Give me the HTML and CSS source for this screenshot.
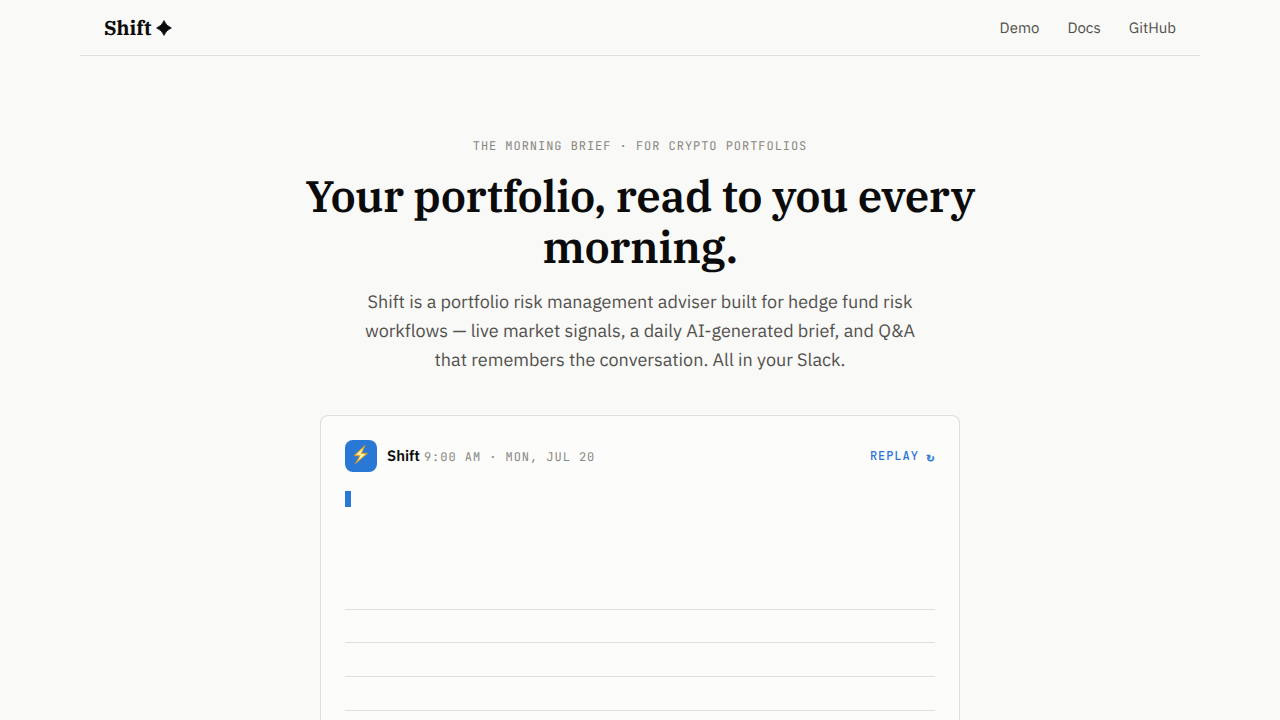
FILE: index.html
```html
<!DOCTYPE html>
<html lang="en">
<head>
<meta charset="utf-8">
<title>Shift</title>
<link rel="stylesheet" href="styles.css">
</head>
<body>
<header class="nav">
  <a class="brand">Shift<svg class="star" viewBox="0 0 16 16"><path d="M8 .6Q9.900 5.800 15.400 8Q9.900 10.200 8 15.400Q6.100 10.200 .6 8Q6.100 5.800 8 .6Z" fill="#0b0b0b" stroke="#0b0b0b" stroke-width=".8" stroke-linejoin="round"/></svg></a>
  <nav class="links"><a>Demo</a><a>Docs</a><a>GitHub</a></nav>
</header>
<main class="hero">
  <p class="eyebrow">The morning brief · for crypto portfolios</p>
  <h1 class="title">Your portfolio, read to you every morning.</h1>
  <p class="lead">Shift is a portfolio risk management adviser built for hedge fund risk workflows — live market signals, a daily AI-generated brief, and Q&amp;A that remembers the conversation. All in your Slack.</p>
  <section class="card">
    <div class="card-head">
      <svg class="avatar" viewBox="0 0 32 32"><path d="M20 5.400L9 15.600L14.800 15.900L10.300 23.700L22.400 13.400L16.600 13.100Z" fill="#fbc02d" stroke="#e39a1c" stroke-width=".8" stroke-linejoin="round"/><path d="M18 8.200L11.300 14.800L16 15.100L13.200 20.200L20.300 14.200L15.300 13.900Z" fill="#fff8c4"/></svg>
      <div class="sender"><span class="name">Shift</span> <span class="time">9:00 AM · MON, JUL 20</span></div>
      <button class="replay">REPLAY <span class="arrow">↻</span></button>
    </div>
    <div class="typing"><span class="caret"></span></div>
    <div class="row first"></div><div class="row"></div><div class="row"></div><div class="row last"></div>
  </section>
</main>
</body>
</html>
```
FILE: styles.css
```css
* { box-sizing: border-box; }
body { margin: 0; height: 720px; overflow: hidden; display: flex; flex-direction: column; background: #f9f9f7; color: #0b0b0b; font-family: "IBM Plex Sans", Roboto, sans-serif; text-rendering: geometricPrecision; -webkit-font-smoothing: antialiased; }
.nav { width: 1120px; height: 56px; flex: none; margin: 0 auto; padding: 0 24px; border-bottom: 1px solid #dfdfdc; display: flex; align-items: center; justify-content: space-between; }
.brand { display: flex; align-items: center; gap: 5px; font: 700 20px "IBM Plex Serif", "Noto Serif", serif; }
.star { width: 16px; height: 16px; }
.links { display: flex; gap: 28px; padding-top: 2px; font-size: 15px; line-height: 20px; color: #52514e; }
.hero { flex: 1; min-height: 0; display: flex; flex-direction: column; align-items: center; padding-top: 80px; }
.eyebrow { margin: 0; font: 12px/20px "JetBrains Mono", "IBM Plex Mono", monospace; letter-spacing: .08em; text-transform: uppercase; color: #898781; white-space: nowrap; }
.title { width: 720px; margin: 15px 0 0; font: 600 44px/51px "IBM Plex Serif", "Noto Serif", serif; letter-spacing: -.01em; text-align: center; }
.lead { width: 560px; margin: 14px 0 0; font-size: 18px; line-height: 29px; color: #52514e; text-align: center; }
.card { flex: 1; min-height: 0; width: 640px; margin-top: 41px; padding: 24px 24px 0; border: 1px solid #dfdfdc; border-bottom: 0; border-radius: 8px 8px 0 0; background: #fcfcfb; }
.card-head { display: flex; align-items: center; gap: 10px; height: 32px; }
.avatar { width: 32px; height: 32px; border-radius: 8px; background: #2a78d6; }
.sender { font-size: 15px; line-height: 24px; padding-top: 2px; }
.name { font-weight: 600; }
.time { font: 12px "JetBrains Mono", "IBM Plex Mono", monospace; letter-spacing: .08em; color: #898781; margin-left: .4px; }
.replay { height: 20px; margin-left: auto; padding: 0; border: 0; background: none; color: #2a78d6; font: 500 12px/20px "JetBrains Mono", "IBM Plex Mono", monospace; letter-spacing: .08em; display: flex; gap: 7px; }
.arrow { width: 9.16px; padding-top: 1.5px; font-family: "DejaVu Sans", sans-serif; font-weight: 700; font-size: 10.5px; letter-spacing: 0; -webkit-text-stroke: .3px #2a78d6; }
.typing { height: 137px; padding-top: 19px; }
.caret { display: block; width: 6px; height: 16px; background: #2a78d6; }
.row { height: 34px; border-top: 1px solid #dfdfdc; }
.row.first { height: 33px; }
.row.last { height: 10px; }
```
